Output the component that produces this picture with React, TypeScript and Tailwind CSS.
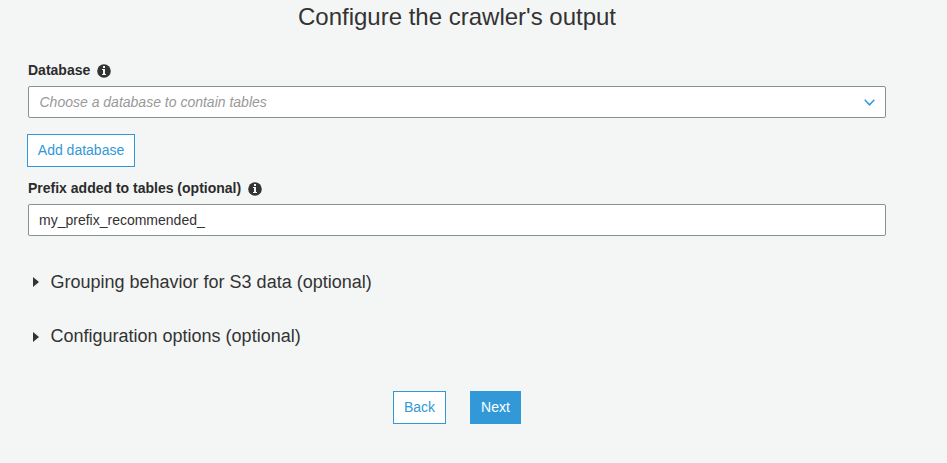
import React from "react";

function InfoIcon() {
  return (
    <svg className="relative top-px ml-[7px] h-[14px] w-[14px] shrink-0" viewBox="0 0 14 14" aria-hidden="true">
      <circle cx="7" cy="7" r="6.8" fill="#333" />
      <path d="M6 2h2v2H6zM5 5h3v5h1v1H5v-1h1V6H5z" fill="#f4f6f6" />
    </svg>
  );
}

function Disclosure({ label, arrowClass = "" }: { label: string; arrowClass?: string }) {
  return (
    <button className="flex h-6 items-center text-[18px] leading-6">
      <svg className={`mr-[11.5px] ml-[5px] h-[10px] w-[6px] ${arrowClass}`} viewBox="0 0 6 10" aria-hidden="true">
        <path d="M0 0L6 5L0 10Z" fill="#333" />
      </svg>
      {label}
    </button>
  );
}

export default function App() {
  return (
    <main className="h-[463px] w-[947px] overflow-hidden bg-[#f4f6f6] pr-[61px] pl-7 font-['Liberation_Sans',Arial,sans-serif] text-[14px] text-[#333]">
      <h1 className="pt-[2px] text-center text-[24px] leading-[30px]">Configure the crawler's output</h1>
      <div className="mt-7 flex h-5 items-center font-bold text-[#2b2b2b]">Database<InfoIcon /></div>
      <div className="mt-[6px] flex h-8 items-center justify-between rounded-[2px] border border-[#879191] bg-white pr-[10px] pl-[10.5px] text-[#999] italic">
        Choose a database to contain tables
        <svg className="h-[7px] w-[11px]" viewBox="0 0 11 7" fill="none" stroke="#3199d8" strokeWidth="1.500" aria-hidden="true"><path d="M.7 .8L5.500 5.800L10.300 .8" /></svg>
      </div>
      <button className="mt-4 -ml-px flex h-[33px] w-[108px] items-center justify-center border border-[#3199d8] bg-white text-[#3199d8]">Add database</button>
      <div className="mt-[11px] flex h-5 items-center font-bold text-[#2b2b2b]">Prefix added to tables (optional)<InfoIcon /></div>
      <input aria-label="Table prefix" className="mt-[6px] block h-8 w-full rounded-[2px] border border-[#879191] bg-white px-[10px] text-[#333] outline-none" defaultValue="my_prefix_recommended_" />
      <div className="mt-[34px]"><Disclosure label="Grouping behavior for S3 data (optional)" /></div>
      <div className="mt-[30px]"><Disclosure label="Configuration options (optional)" arrowClass="mt-[2px]" /></div>
      <div className="mt-[43px] flex justify-center gap-6">
        <button className="h-[33px] w-[53px] border border-[#3199d8] bg-white text-[#3199d8]">Back</button>
        <button className="h-[33px] w-[51px] bg-[#3199d8] text-white">Next</button>
      </div>
    </main>
  );
}
